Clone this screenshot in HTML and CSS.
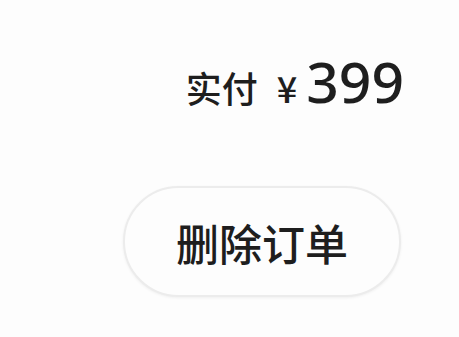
FILE: index.html
```html
<!DOCTYPE html>
<html lang="zh">
<head>
<meta charset="utf-8">
<link rel="stylesheet" href="styles.css">
</head>
<body>
<div class="panel">
  <div class="price">
    <span class="label">实付</span>
    <span class="currency">¥</span>
    <span class="amount">399</span>
  </div>
  <button class="btn">删除订单</button>
</div>
</body>
</html>
```
FILE: styles.css
```css
html, body {
  margin: 0;
  padding: 0;
  background: #fdfdfd;
  width: 459px;
  height: 337px;
  overflow: hidden;
}
.panel {
  display: flex;
  flex-direction: column;
  align-items: flex-end;
  padding: 53px 57px 0 0;
  font-family: "Noto Sans CJK SC", "Noto Sans", sans-serif;
  color: #1e1e1e;
}
.price {
  display: flex;
  align-items: baseline;
  line-height: 1;
}
.label {
  font-size: 36px;
  font-weight: 500;
  letter-spacing: 0;
}
.currency {
  font-size: 36px;
  font-weight: 500;
  margin-left: 19px;
  margin-right: 9px;
}
.amount {
  font-family: "Noto Sans", sans-serif;
  font-size: 57px;
  font-weight: 500;
  margin-right: -2px;
}
.btn {
  margin-top: 76px;
  width: 278px;
  height: 111px;
  border-radius: 56px;
  border: 2px solid #ececec;
  background: #fdfdfd;
  box-shadow: 0 1px 3px rgba(0,0,0,0.06);
  font-family: "Noto Sans CJK SC", sans-serif;
  font-size: 43px;
  font-weight: 500;
  color: #1e1e1e;
  padding: 0;
  margin-right: 1px;
}
```
